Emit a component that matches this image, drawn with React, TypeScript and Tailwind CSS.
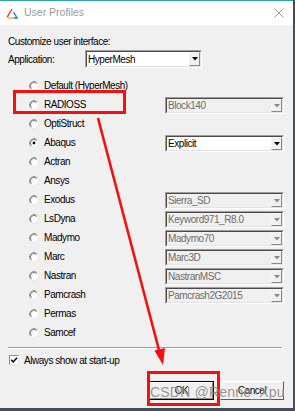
import React from "react";

type Combo = { t: string; en: boolean } | null;

const rows: { label: string; combo: Combo; sel?: boolean }[] = [
  { label: "Default (HyperMesh)", combo: null },
  { label: "RADIOSS", combo: { t: "Block140", en: false } },
  { label: "OptiStruct", combo: null },
  { label: "Abaqus", combo: { t: "Explicit", en: true }, sel: true },
  { label: "Actran", combo: null },
  { label: "Ansys", combo: null },
  { label: "Exodus", combo: { t: "Sierra_SD", en: false } },
  { label: "LsDyna", combo: { t: "Keyword971_R8.0", en: false } },
  { label: "Madymo", combo: { t: "Madymo70", en: false } },
  { label: "Marc", combo: { t: "Marc3D", en: false } },
  { label: "Nastran", combo: { t: "NastranMSC", en: false } },
  { label: "Pamcrash", combo: { t: "Pamcrash2G2015", en: false } },
  { label: "Permas", combo: null },
  { label: "Samcef", combo: null },
];

function Radio({ on }: { on?: boolean }) {
  return (
    <svg width="10" height="10" viewBox="0 0 10 10" className="shrink-0">
      <circle cx="5" cy="5" r="4.5" fill="#ffffff" />
      <path d="M1.82 8.18 A4.5 4.5 0 0 1 8.18 1.82" fill="none" stroke="#9a9a9a" strokeWidth="1" />
      <path d="M8.18 1.82 A4.5 4.5 0 0 1 1.82 8.18" fill="none" stroke="#e6e6e6" strokeWidth="1" />
      <path d="M2.5 7.5 A3.5 3.5 0 0 1 7.5 2.5" fill="none" stroke="#5c5c5c" strokeWidth="0.8" />
      {on && <circle cx="5" cy="5" r="1.4" fill="#000" />}
    </svg>
  );
}

function Arrow({ en }: { en: boolean }) {
  return (
    <svg width="6" height="4" viewBox="0 0 6 4">
      <path d="M0 0 L6 0 L3 3.5 Z" fill={en ? "#000000" : "#8a8a8a"} />
    </svg>
  );
}

function ComboBox({ text, en, w }: { text: string; en: boolean; w: string }) {
  return (
    <div
      className={
        w === "app"
          ? "flex h-[18px] w-[117px] border border-t-[#a0a0a0] border-l-[#a0a0a0] border-b-white border-r-white"
          : "flex h-[17px] w-[119px] border border-t-[#a0a0a0] border-l-[#a0a0a0] border-b-white border-r-white"
      }
    >
      <div
        className={
          en
            ? "flex flex-1 items-center border border-t-[#4a4a4a] border-l-[#4a4a4a] border-b-[#e3e3e3] border-r-[#e3e3e3] bg-white"
            : "flex flex-1 items-center border border-t-[#4a4a4a] border-l-[#4a4a4a] border-b-[#e3e3e3] border-r-[#e3e3e3] bg-[#f0f0f0]"
        }
      >
        <span className={en ? "flex-1 pl-[1px] text-black" : "flex-1 pl-[1px] text-[#6d6d6d]"}>{text}</span>
        <div className="flex h-full w-[11px] items-center justify-center border border-t-[#f4f4f4] border-l-[#f4f4f4] border-b-[#8a8a8a] border-r-[#8a8a8a] bg-[#f0f0f0]">
          <Arrow en={en} />
        </div>
      </div>
    </div>
  );
}

export default function App() {
  return (
    <div className="relative flex h-[411px] w-[295px] flex-col overflow-hidden border-r-2 border-b-[3px] border-[#434d59] bg-[#f0f0f0] font-['Liberation_Sans',Arial,sans-serif] text-[10px] tracking-[-0.45px] text-black">
      {/* title bar */}
      <div className="flex h-[25px] shrink-0 items-center border-t border-[#2ea3ab] bg-white pl-[6px] pr-[9px]">
        <svg width="12" height="11" viewBox="0 0 12 11">
          <path d="M6 1 L1.2 9.2" stroke="#e8343a" strokeWidth="1.4" fill="none" />
          <path d="M1.8 10 L7 10" stroke="#f5b21a" strokeWidth="1.4" fill="none" />
          <path d="M7.5 10 L11 10 L7.6 4" stroke="#2f7fd0" strokeWidth="1.4" fill="none" />
        </svg>
        <span className="ml-[6px] text-[10.5px] tracking-normal text-[#9a9a9a]">User Profiles</span>
        <div className="flex-1" />
        <svg width="10" height="10" viewBox="0 0 10 10">
          <path d="M0.5 0.5 L9.5 9.5 M9.5 0.5 L0.5 9.5" stroke="#8c8c8c" strokeWidth="0.9" />
        </svg>
      </div>

      {/* body */}
      <div className="flex flex-1 flex-col pl-[8px]">
        <div className="mt-[10px] h-[13px] leading-[13px]">Customize user interface:</div>
        <div className="mt-[2px] flex h-[18px] items-center">
          <span className="w-[77px]">Application:</span>
          <ComboBox text="HyperMesh" en={true} w="app" />
        </div>

        <div className="mt-[8px] flex flex-col">
          {rows.map((r) => (
            <div key={r.label} className="flex h-[19px] items-center">
              <div className="flex w-[157px] items-center pl-[21px]">
                <Radio on={r.sel} />
                <span className="ml-[5px]">{r.label}</span>
              </div>
              {r.combo && (
                <div className="pt-[2px]">
                  <ComboBox text={r.combo.t} en={r.combo.en} w="r" />
                </div>
              )}
            </div>
          ))}
        </div>

        <div className="mt-[5px] w-[274px] border-t border-b border-t-[#a0a0a0] border-b-white" />

        <div className="mt-[5px] flex h-[12px] items-center pl-[1px]">
          <svg width="10" height="10" viewBox="0 0 10 10" className="shrink-0">
            <rect x="0" y="0" width="10" height="10" fill="#ffffff" />
            <path d="M0.5 10 V0.5 H10" fill="none" stroke="#8a8a8a" />
            <path d="M9.5 0.5 V9.5 H0.5" fill="none" stroke="#e6e6e6" />
            <path d="M2.2 4.8 L4.2 6.9 L8 2.8" fill="none" stroke="#000" strokeWidth="1.5" />
          </svg>
          <span className="ml-[5px]">Always show at start-up</span>
        </div>

        <div className="mt-[15px] flex pl-[141px]">
          <div className="flex h-[19px] w-[65px] border border-black">
            <div className="flex flex-1 items-center justify-center border border-t-white border-l-white border-b-[#8a8a8a] border-r-[#8a8a8a] bg-[#f0f0f0]">
              OK
            </div>
          </div>
          <div className="ml-[6px] flex h-[19px] w-[64px] items-center justify-center border border-t-white border-l-white border-b-[#5a5a5a] border-r-[#5a5a5a] bg-[#f0f0f0]">
            Cancel
          </div>
        </div>
      </div>

      {/* annotations */}
      <div className="pointer-events-none absolute left-[13px] top-[90px] h-[24px] w-[113px] border-[3px] border-[#f50f0f]" />
      <div className="pointer-events-none absolute left-[147px] top-[371px] h-[35px] w-[73px] border-[3px] border-[#f50f0f]" />
      <svg className="pointer-events-none absolute left-0 top-0" width="295" height="411" viewBox="0 0 295 411">
        <line x1="98" y1="118" x2="159.5" y2="352" stroke="#f51010" strokeWidth="2.6" />
        <polygon points="163,365 154.4,350.5 165,348" fill="#f51010" />
      </svg>
      <div className="pointer-events-none absolute left-[150px] top-[383px] text-[14px] leading-[18px] tracking-[0.2px] text-[#7c7c7c] opacity-80 [text-shadow:0_0_1px_#ffffff]">
        CSDN @Renne_Xpu
      </div>
    </div>
  );
}
